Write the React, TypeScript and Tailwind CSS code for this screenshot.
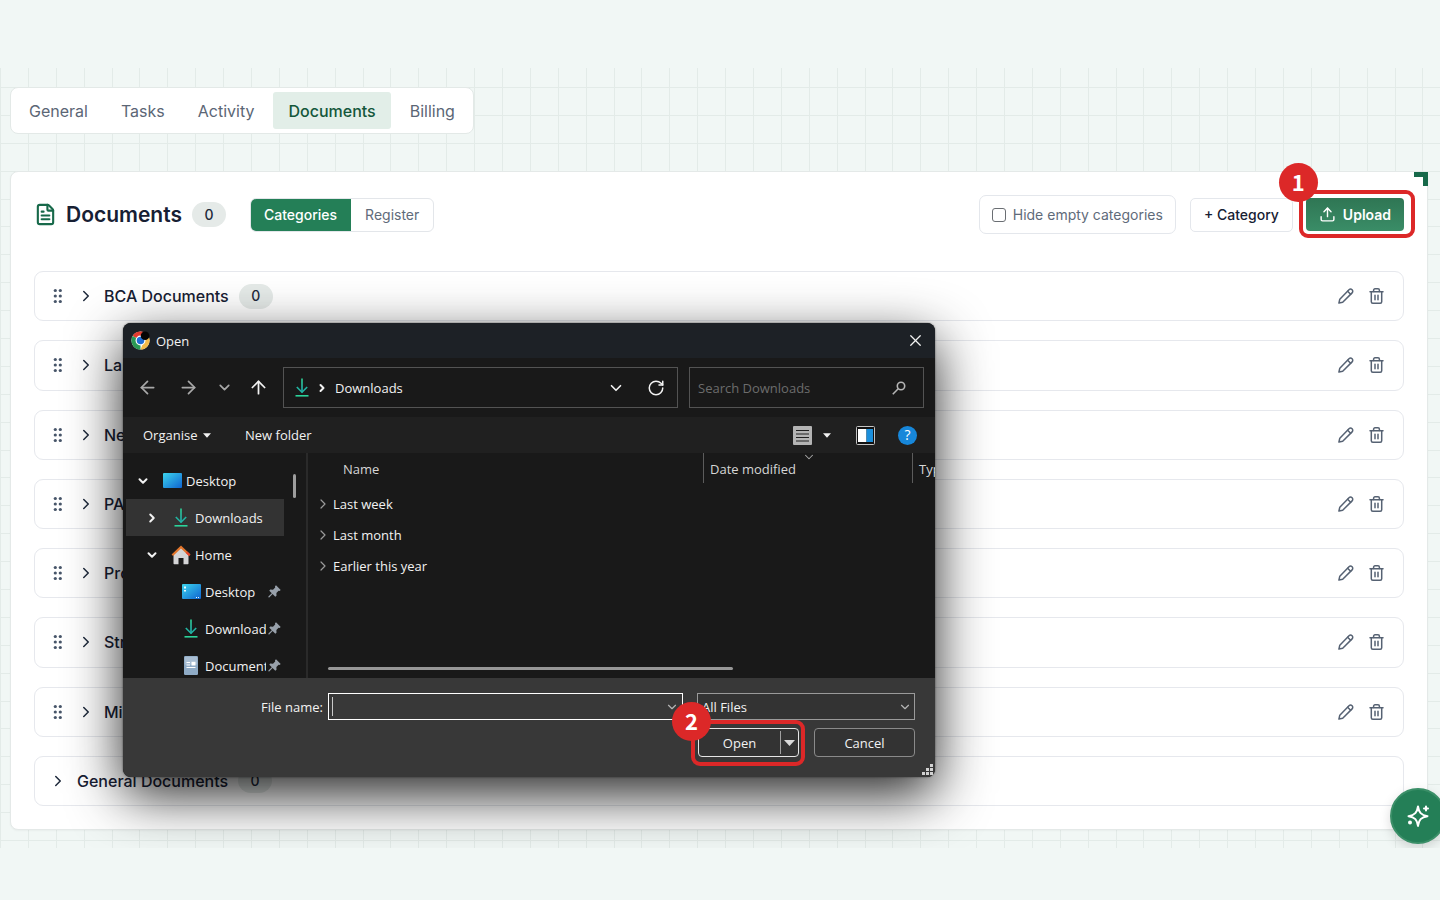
import React from "react";
import {
  ArrowLeft,
  ArrowRight,
  ArrowUp,
  ChevronDown,
  ChevronRight,
  FileText,
  RotateCw,
  Upload,
  X,
} from "lucide-react";

const UI_FONT = "font-['Inter',sans-serif]";
const DIALOG_FONT = "font-['Open_Sans',sans-serif]";

const tabs = ["General", "Tasks", "Activity", "Documents", "Billing"];
const categories = [
  "BCA Documents",
  "Land Documents",
  "New Documents",
  "PA Documents",
  "Project Documents",
  "Structural Documents",
  "Miscellaneous",
];

function GridBackdrop() {
  const step = 27.89;
  const columns = Array.from({ length: 100 }, (_, i) => Math.round(i * step));
  const rows = Array.from({ length: 28 }, (_, i) => Math.round(19 + i * step));
  return (
    <svg className="absolute inset-0 h-full w-full" aria-hidden="true" shapeRendering="crispEdges">
      {columns.map((x) => (
        <rect key={x} x={x} y="0" width="1" height="100%" fill="#e3ebe8" />
      ))}
      {rows.map((y) => (
        <rect key={y} x="0" y={y} width="100%" height="1" fill="#e3ebe8" />
      ))}
    </svg>
  );
}

function Grip() {
  return (
    <svg width="10" height="16" viewBox="0 0 10 16" fill="#475569" aria-hidden="true">
      {[2.5, 8, 13.5].map((y) => (
        <React.Fragment key={y}>
          <circle cx="2.3" cy={y} r="1.6" />
          <circle cx="7.3" cy={y} r="1.6" />
        </React.Fragment>
      ))}
    </svg>
  );
}

function PencilIcon() {
  return (
    <svg width="16" height="16" viewBox="0 0 16 16" fill="none" stroke="#566273" strokeWidth="1.5" strokeLinejoin="round" strokeLinecap="round" aria-hidden="true">
      <path d="M.9 15.1 1.8 11.2 11 1.8a2.15 2.15 0 0 1 3.1 3.1L4.7 14.2Z" />
      <path d="m9.6 3.3 3 3" />
    </svg>
  );
}

function TrashIcon() {
  return (
    <svg width="15" height="16" viewBox="0 0 15 16" fill="none" stroke="#566273" strokeWidth="1.5" strokeLinejoin="round" strokeLinecap="round" aria-hidden="true">
      <path d="M1 3.8h13" />
      <path d="M2.3 3.8v9.9c0 .9.6 1.5 1.5 1.5h7.4c.9 0 1.5-.6 1.5-1.5V3.8" />
      <path d="M4.6 3.6V2.2c0-.8.6-1.4 1.4-1.4h3c.8 0 1.4.6 1.4 1.4v1.4" />
      <path d="M6 7.2v4.6M9 7.2v4.6" />
    </svg>
  );
}

function SparkleIcon() {
  return (
    <svg width="24" height="24" viewBox="0 0 24 24" fill="none" stroke="currentColor" strokeWidth="2" strokeLinejoin="round" strokeLinecap="round" aria-hidden="true">
      <path d="M12 2.500c.9 6 3 8.600 9.500 9.700-6.500 1.100-8.600 3.600-9.500 9.700-.9-6.100-3-8.600-9.500-9.700 6.500-1.100 8.600-3.700 9.500-9.700Z" />
      <path d="M20 2.500v4M18 4.500h4" />
      <circle cx="4" cy="18.500" r="1" fill="currentColor" />
    </svg>
  );
}

function Count() {
  return (
    <span className="flex h-[25px] w-[34px] items-center justify-center rounded-full bg-[#e5eae8] text-sm font-medium text-[#1e293b]">
      0
    </span>
  );
}

function CategoryRow({ name, fixed, counted }: { name: string; fixed?: boolean; counted?: boolean }) {
  return (
    <li className="flex items-center rounded-[9px] border border-[#e6e8ed] bg-white pl-[18px] pr-[19px]">
      {!fixed && (
        <button aria-label={`Move ${name}`} className="mr-[14px]">
          <Grip />
        </button>
      )}
      <button aria-label={`Expand ${name}`} className={fixed ? "-ml-[4px] mr-[10px]" : "mr-[9px]"}>
        <ChevronRight size={18} strokeWidth={2} className="text-[#1e293b]" />
      </button>
      <h2 className="min-w-0 truncate text-base font-medium text-[#172033]">{name}</h2>
      {counted && (
        <div className="ml-[10px]">
          <Count />
        </div>
      )}
      {!fixed && (
        <div className="ml-auto flex items-center gap-[15px]">
          <button aria-label={`Rename ${name}`}>
            <PencilIcon />
          </button>
          <button aria-label={`Delete ${name}`}>
            <TrashIcon />
          </button>
        </div>
      )}
    </li>
  );
}

function StepMark({ n }: { n: number }) {
  return (
    <span className="flex h-[39px] w-[39px] items-center justify-center rounded-full bg-[#dc2828] pb-[4px] font-['Noto_Sans_CJK_JP',sans-serif] text-[22px] font-bold leading-none text-white">
      {n}
    </span>
  );
}

function ChromeLogo() {
  return (
    <svg width="19" height="19" viewBox="0 0 48 48" aria-hidden="true">
      <circle cx="24" cy="24" r="23" fill="#fff" />
      <path d="M24 24 4.1 12.5A23 23 0 0 1 43.9 12.5Z" fill="#e33b2e" />
      <path d="M24 24 4.1 12.5A23 23 0 0 0 24 47Z" fill="#2b9a55" />
      <path d="M24 24 43.9 12.5A23 23 0 0 1 24 47L32 28Z" fill="#f2bb4a" />
      <circle cx="24" cy="24" r="12.5" fill="#fff" />
      <circle cx="24" cy="24" r="9.5" fill="#1f6fd6" />
      <circle cx="35.5" cy="12" r="11" fill="#050505" />
    </svg>
  );
}

function DownloadGlyph() {
  return (
    <svg width="14" height="19" viewBox="0 0 14 19" fill="none" strokeWidth="1.6" aria-hidden="true">
      <defs>
        <linearGradient id="dl" x1="0" y1="0" x2="0" y2="1">
          <stop offset="0" stopColor="#2fd094" />
          <stop offset="1" stopColor="#1fa8b4" />
        </linearGradient>
      </defs>
      <rect x="6.2" y="0.5" width="1.6" height="14" fill="url(#dl)" />
      <path d="m1.8 9 5.2 5.2L12.2 9" stroke="#22b5a2" />
      <path d="M.5 17.8h13" stroke="#2bd39a" />
    </svg>
  );
}

function DesktopGlyph({ shortcuts }: { shortcuts?: boolean }) {
  return (
    <svg width="19" height="15" viewBox="0 0 19 15" aria-hidden="true">
      <defs>
        <linearGradient id="dk" x1="0" y1="0" x2="1" y2="1">
          <stop offset="0" stopColor="#3cd5ee" />
          <stop offset="1" stopColor="#0f63d0" />
        </linearGradient>
      </defs>
      <rect width="19" height="15" rx="1" fill="url(#dk)" />
      {shortcuts && <path d="M2 2.5h2v2H2zM2 6h2v1.6H2zM14 13h1v1h-1zM16 13h1v1h-1z" fill="#e9fbff" />}
    </svg>
  );
}

function HomeGlyph() {
  return (
    <svg width="20" height="20" viewBox="0 0 20 20" aria-hidden="true">
      <path d="M2.5 9 10 2.5 17.5 9v9.500a.8.8 0 0 1-.8.8h-4.200v-6.300h-5v6.300H3.300a.8.8 0 0 1-.8-.8Z" fill="#d4d4d6" />
      <path d="M1.3 10.3 10 2l8.700 8.300" fill="none" stroke="#e2752b" strokeWidth="2.2" />
      <path d="m15.5 7.2 3.200 3.100" fill="none" stroke="#e5442d" strokeWidth="2.2" />
    </svg>
  );
}

function DocumentGlyph() {
  return (
    <svg width="14" height="19" viewBox="0 0 14 19" aria-hidden="true">
      <rect width="14" height="19" rx="1.2" fill="#8fabc6" />
      <rect x=".8" y=".8" width="12.4" height="8" rx="1" fill="#a9bed3" />
      <path d="M2.5 6.5h3.500M2.500 9h3.500M2.500 11.500h9" stroke="#fff" strokeWidth="1.2" />
      <rect x="7.5" y="5.8" width="4" height="3.7" fill="#fff" />
    </svg>
  );
}

function PinGlyph() {
  return (
    <svg width="13" height="13" viewBox="0 0 13 13" fill="#98a1ab" aria-hidden="true">
      <path d="M8 .3 12.700 5l-1.200.9-.9-.1-2.200 2.300.1 2.700-1.200.9-2.700-2.700L1.200 12.500.3 12.300.4 11.600 3.800 8.300 1.300 5.700l.9-1.100 2.800.1L7.200 2.500 7 1.300Z" />
    </svg>
  );
}

type TreeItem = { label: string; level: number; state?: "open" | "closed"; icon: React.ReactNode; pinned?: boolean };

const tree: TreeItem[] = [
  { label: "Desktop", level: 0, state: "open", icon: <DesktopGlyph /> },
  { label: "Downloads", level: 1, state: "closed", icon: <DownloadGlyph /> },
  { label: "Home", level: 1, state: "open", icon: <HomeGlyph /> },
  { label: "Desktop", level: 2, icon: <DesktopGlyph shortcuts />, pinned: true },
  { label: "Downloads", level: 2, icon: <DownloadGlyph />, pinned: true },
  { label: "Documents", level: 2, icon: <DocumentGlyph />, pinned: true },
];
const indent = ["pl-[10px]", "pl-[19px]", "pl-[29px]"];

function Caret() {
  return (
    <svg width="8" height="5" viewBox="0 0 8 5" aria-hidden="true">
      <path d="M0 .3h8L4 4.700Z" fill="currentColor" />
    </svg>
  );
}

function OpenDialog() {
  return (
    <div
      role="dialog"
      aria-label="Open"
      className={`${DIALOG_FONT} absolute left-[123px] top-[255px] z-10 flex w-[812px] flex-col rounded-[8px] bg-[#191919] text-[13px] leading-5 text-[#f2f2f2] shadow-[0_0_2px_rgba(0,0,0,0.6),0_18px_54px_rgba(0,0,0,0.85)]`}
    >
      <div className="flex h-[35px] items-center gap-[6px] rounded-t-[8px] bg-[#1d2126] pl-[8px] pr-[10px]">
        <ChromeLogo />
        <span>Open</span>
        <button aria-label="Close" className="ml-auto">
          <X size={19} strokeWidth={1.6} />
        </button>
      </div>

      <div className="flex h-[59px] items-center pl-[14px] pr-[11px]">
        <button aria-label="Back" className="mr-[20px] text-[#a8a8a8]">
          <ArrowLeft size={21} strokeWidth={2} />
        </button>
        <button aria-label="Forward" className="mr-[17px] text-[#a8a8a8]">
          <ArrowRight size={21} strokeWidth={2} />
        </button>
        <button aria-label="Recent locations" className="mr-[15px] text-[#a8a8a8]">
          <ChevronDown size={17} strokeWidth={2.4} />
        </button>
        <button aria-label="Up" className="mr-[14px]">
          <ArrowUp size={21} strokeWidth={2} />
        </button>
        <div className="flex h-[41px] w-[395px] items-center border border-[#535353] pl-[11px] pr-[12px]">
          <DownloadGlyph />
          <ChevronRight size={12} strokeWidth={4} className="ml-[7px] mr-[7px]" />
          <span>Downloads</span>
          <button aria-label="Previous locations" className="ml-auto mr-[22px]">
            <ChevronDown size={18} strokeWidth={2.2} />
          </button>
          <button aria-label="Refresh">
            <RotateCw size={18} strokeWidth={2} />
          </button>
        </div>
        <label className="ml-[11px] flex h-[41px] min-w-0 flex-1 items-center border border-[#535353] pl-[8px] pr-[17px]">
          <input aria-label="Search Downloads" placeholder="Search Downloads" className="min-w-0 flex-1 bg-transparent outline-none placeholder:text-[#6c6c6c]" />
          <svg width="14" height="14" viewBox="0 0 14 14" fill="none" stroke="#b5b5b5" strokeWidth="1.6" aria-hidden="true">
            <circle cx="9" cy="5" r="3.7" />
            <path d="M6.200 7.800.8 13.200" />
          </svg>
        </label>
      </div>

      <div className="flex h-[36px] items-center bg-[#202020] pl-[20px] pr-[18px]">
        <button className="flex w-[68px] items-center justify-between">
          Organise
          <Caret />
        </button>
        <button className="ml-[34px]">New folder</button>
        <button aria-label="Change view" className="ml-auto flex items-center gap-[11px]">
          <svg width="19" height="19" viewBox="0 0 19 19" aria-hidden="true">
            <rect width="19" height="19" rx="1" fill="#b4b4b4" />
            <path d="M3 4.500h13M3 8h13M3 11.500h13M3 15h13" stroke="#202020" strokeWidth="1.2" />
          </svg>
          <Caret />
        </button>
        <button aria-label="Preview pane" className="ml-[25px]">
          <svg width="19" height="19" viewBox="0 0 19 19" aria-hidden="true">
            <rect x=".5" y=".5" width="18" height="18" rx="1" fill="#111" stroke="#c4c4c4" />
            <rect x="2" y="3" width="8.5" height="13" fill="#fff" />
            <rect x="10.5" y="3" width="6.5" height="13" fill="#1b8fdc" />
          </svg>
        </button>
        <button aria-label="Help" className="ml-[23px] flex h-[19px] w-[19px] items-center justify-center rounded-full bg-[#1787da] text-sm leading-none text-white">
          ?
        </button>
      </div>

      <div className="flex h-[225px] overflow-hidden">
        <div className="flex w-[185px] border-r-2 border-[#2a2a2a]">
          <ul className="ml-[3px] w-[158px] pt-[9px]">
            {tree.map((item, i) => (
              <li
                key={i}
                className={`flex h-[37px] items-center ${indent[item.level]} ${item.state === "closed" ? "bg-[#333333]" : ""}`}
              >
                <span className="flex w-[14px] shrink-0 justify-center">
                  {item.state === "open" && <ChevronDown size={16} strokeWidth={3.4} />}
                  {item.state === "closed" && <ChevronRight size={16} strokeWidth={3.4} />}
                </span>
                <span className="ml-[12px] flex w-[20px] shrink-0 justify-center">{item.icon}</span>
                <span className={item.pinned ? "ml-[4px] w-[61px] overflow-hidden whitespace-nowrap" : "ml-[4px]"}>{item.label}</span>
                {item.pinned && (
                  <span className="ml-[2px]">
                    <PinGlyph />
                  </span>
                )}
              </li>
            ))}
          </ul>
          <div className="ml-[9px] mt-[21px] h-[24px] w-[3px] rounded-full bg-[#9d9d9d]" />
        </div>
        <div className="relative min-w-0 flex-1 overflow-hidden">
          <table className="w-[680px] table-fixed text-left">
            <thead>
              <tr className="h-[35px] text-[#d6d6d6]">
                <th className="w-[395px] pb-[3px] pl-[35px] font-normal">Name</th>
                <th className="w-[209px] pb-[5px] font-normal">
                  <div className="h-[30px] border-l border-[#5c5c5c] pl-[6px] pt-[6px]">Date modified</div>
                </th>
                <th className="pb-[5px] font-normal">
                  <div className="h-[30px] border-l border-[#5c5c5c] pl-[6px] pt-[6px]">Type</div>
                </th>
              </tr>
            </thead>
            <tbody>
              {["Last week", "Last month", "Earlier this year"].map((group) => (
                <tr key={group} className="h-[31px]">
                  <td colSpan={3}>
                    <button className="flex items-center gap-[2px] pl-[7px]">
                      <ChevronRight size={16} strokeWidth={1.8} className="text-[#9a9a9a]" />
                      {group}
                    </button>
                  </td>
                </tr>
              ))}
            </tbody>
          </table>
          <ChevronDown size={14} strokeWidth={1.8} className="absolute left-[494px] top-[-3px] text-[#a8a8a8]" />
          <div className="absolute bottom-[8px] left-[20px] h-[3px] w-[405px] rounded-full bg-[#979797]" />
        </div>
      </div>

      <div className="relative h-[99px] rounded-b-[8px] bg-[#383838] pr-[20px] pt-[15px]">
        <div className="flex items-center justify-end">
          <label htmlFor="file-name" className="mr-[5px]">
            File name:
          </label>
          <div className="mr-[14px] flex h-[27px] w-[355px] items-center border border-white px-[3px]">
            <span className="h-[19px] w-px bg-[#c9c9c9]" />
            <input id="file-name" className="min-w-0 flex-1 bg-transparent outline-none" />
            <ChevronDown size={14} strokeWidth={2} className="text-[#b5b5b5]" />
          </div>
          <div className="relative">
            <select aria-label="File type" className="h-[27px] w-[218px] appearance-none border border-[#9a9a9a] bg-[#333333] pl-[4px] outline-none">
              <option>All Files</option>
            </select>
            <ChevronDown size={14} strokeWidth={2} className="pointer-events-none absolute right-[3px] top-[7px] text-[#b5b5b5]" />
          </div>
        </div>
        <div className="mt-[8px] flex justify-end gap-[15px]">
          <div className="relative">
            <div className="flex h-[29px] w-[101px] items-center rounded-[4px] border border-[#e6e6e6] bg-[#333333]">
              <button className="h-full flex-1">Open</button>
              <button aria-label="Open options" className="flex h-[23px] w-[18px] items-center justify-center border-l border-[#a0a0a0]">
                <svg width="11" height="6" viewBox="0 0 11 6" aria-hidden="true">
                  <path d="M0 0h11L5.500 6Z" fill="#d9d9d9" />
                </svg>
              </button>
            </div>
            <div className="pointer-events-none absolute -bottom-[9px] -left-[7px] -right-[6px] -top-[8px] rounded-[9px] border-4 border-[#dc2828]" />
            <div className="absolute -left-[26px] -top-[26px]">
              <StepMark n={2} />
            </div>
          </div>
          <button className="h-[29px] w-[101px] rounded-[4px] border border-[#8a8a8a] bg-[#333333]">Cancel</button>
        </div>
        <svg width="11" height="11" viewBox="0 0 11 11" className="absolute bottom-[2px] right-[2px]" fill="#d2d2d2" aria-hidden="true">
          <path d="M8 0h3v3H8zM8 4h3v3H8zM8 8h3v3H8zM4 4h3v3H4zM4 8h3v3H4zM0 8h3v3H0z" />
        </svg>
      </div>
    </div>
  );
}

export default function App() {
  return (
    <div className={`${UI_FONT} min-h-screen bg-[#f1f7f5] py-[68px]`}>
      <main className="relative overflow-hidden pb-[18px] pl-[10px] pr-[12px] pt-[19px]">
        <GridBackdrop />
        <nav className="relative flex w-fit gap-[5px] rounded-lg border border-[#e3e9e7] bg-white p-[4px]">
          {tabs.map((tab) => (
            <button
              key={tab}
              className={
                tab === "Documents"
                  ? "h-[37px] rounded-[3px] bg-[#e2eee8] px-[15px] text-base font-medium text-[#14573b]"
                  : "h-[37px] px-[14px] text-base text-[#5b6675]"
              }
            >
              {tab}
            </button>
          ))}
        </nav>

        <section className="relative mt-[37px] rounded-lg border border-[#e4e9e8] bg-white px-[23px] pb-[23px] pt-[23px] shadow-[0_1px_2px_rgba(0,0,0,0.04)]">
          <span className="absolute -right-px top-0 h-[14px] w-[14px] border-r-[5px] border-t-[5px] border-[#17694a]" />
          <header className="flex items-center">
            <FileText size={23} strokeWidth={2.2} className="text-[#17694a]" />
            <h1 className="ml-[9px] text-[21px] font-semibold leading-8 text-[#172033]">Documents</h1>
            <div className="ml-[10px]">
              <Count />
            </div>
            <div className="ml-[24px] flex h-[34px] overflow-hidden rounded-[6px] border border-[#e3e6ea] text-sm">
              <button className="-my-px -ml-px bg-[#247f57] px-[14px] font-medium text-white">Categories</button>
              <button className="px-[14px] text-[#5f6b7a]">Register</button>
            </div>
            <label className="ml-auto flex h-[39px] items-center rounded-[7px] border border-[#e4e7ec] bg-white px-[12px] text-sm text-[#5f6b7a]">
              <input type="checkbox" className="mr-[7px] h-[14px] w-[14px] appearance-none rounded-[3px] border border-[#6a6e73]" />
              Hide empty categories
            </label>
            <button className="ml-[14px] h-[34px] rounded-[5px] border border-[#e4e7ec] bg-white px-[13px] text-sm font-medium text-[#172033]">
              + Category
            </button>
            <div className="relative ml-[13px]">
              <button className="flex h-[33px] items-center gap-[7px] rounded-[4px] bg-linear-to-b from-[#2f7654] to-[#3a8d67] px-[13px] text-sm font-semibold text-white">
                <Upload size={17} strokeWidth={2} />
                Upload
              </button>
              <div className="pointer-events-none absolute -bottom-[7px] -left-[7px] -right-[11px] -top-[8px] rounded-[9px] border-4 border-[#dc2828]" />
              <div className="absolute -left-[27px] -top-[35px]">
                <StepMark n={1} />
              </div>
            </div>
          </header>

          <ul className="mt-[37px] grid min-h-[535px] auto-rows-fr gap-[19px]">
            {categories.map((name, i) => (
              <CategoryRow key={name} name={name} counted={i === 0} />
            ))}
            <CategoryRow name="General Documents" fixed counted />
          </ul>
        </section>

        <OpenDialog />

        <button
          aria-label="Assistant"
          className="absolute -right-[6px] bottom-[4px] z-20 flex h-[56px] w-[56px] items-center justify-center rounded-full border-2 border-[#3b8f68] bg-[#247f57] text-white shadow-[0_4px_12px_rgba(0,0,0,0.15)]"
        >
          <SparkleIcon />
        </button>
      </main>
    </div>
  );
}
